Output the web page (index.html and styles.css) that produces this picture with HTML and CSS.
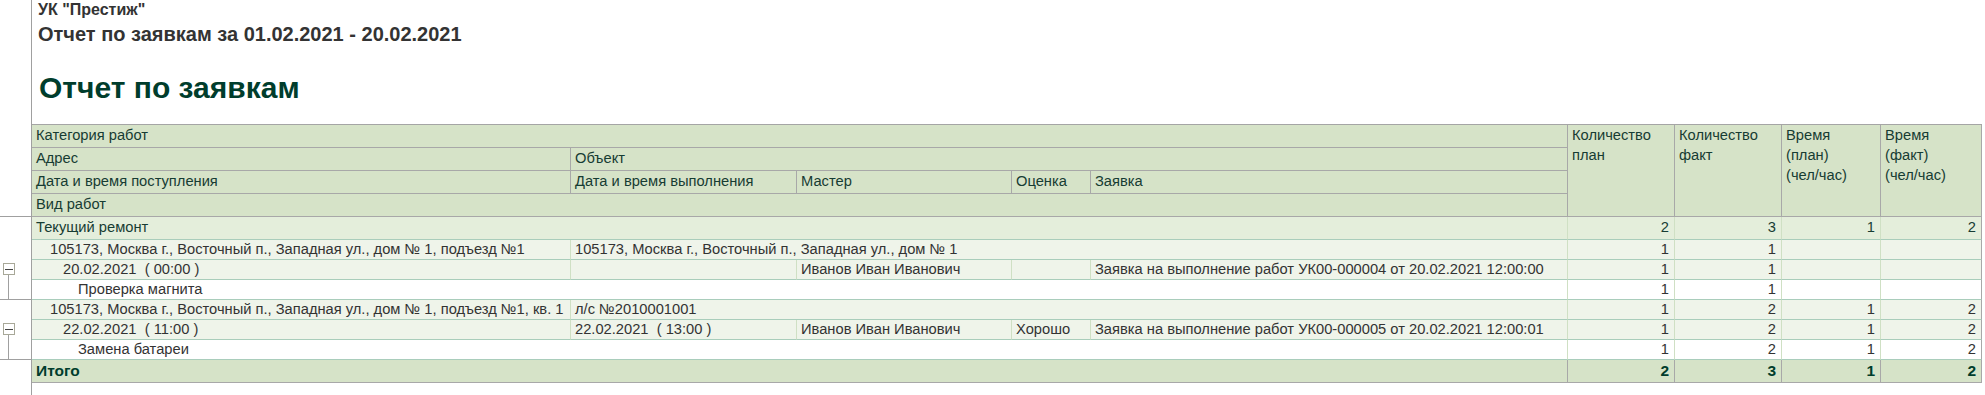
FILE: index.html
```html
<!DOCTYPE html>
<html lang="ru">
<head>
<meta charset="utf-8">
<title>Отчет по заявкам</title>
<link rel="stylesheet" href="styles.css">
</head>
<body>
<div class="page">
  <div class="outline">
    <div class="ol-head"></div>
    <div class="ol-group ol-g1">
      <div class="ol-box"><span class="ol-minus"></span></div>
      <div class="ol-stem"></div>
    </div>
    <div class="ol-group ol-g2">
      <div class="ol-box"><span class="ol-minus"></span></div>
      <div class="ol-stem"></div>
    </div>
  </div>
  <div class="content">
    <div class="org">УК "Престиж"</div>
    <div class="period">Отчет по заявкам за 01.02.2021 - 20.02.2021</div>
    <h1 class="title">Отчет по заявкам</h1>
    <div class="grid">
      <div class="c hd s5">Категория работ</div>
      <div class="c hd hn">Количество<br>план</div>
      <div class="c hd hn">Количество<br>факт</div>
      <div class="c hd hn">Время<br>(план)<br>(чел/час)</div>
      <div class="c hd hn last">Время<br>(факт)<br>(чел/час)</div>
      <div class="c hd">Адрес</div>
      <div class="c hd s4">Объект</div>
      <div class="c hd">Дата и время поступления</div>
      <div class="c hd">Дата и время выполнения</div>
      <div class="c hd">Мастер</div>
      <div class="c hd">Оценка</div>
      <div class="c hd">Заявка</div>
      <div class="c hd s5">Вид работ</div>

      <div class="c grp s5">Текущий ремонт</div>
      <div class="c grp n">2</div>
      <div class="c grp n">3</div>
      <div class="c grp n">1</div>
      <div class="c grp n last">2</div>

      <div class="c det i1">105173, Москва г., Восточный п., Западная ул., дом № 1, подъезд №1</div>
      <div class="c det s4">105173, Москва г., Восточный п., Западная ул., дом № 1</div>
      <div class="c det n">1</div>
      <div class="c det n">1</div>
      <div class="c det n"></div>
      <div class="c det n last"></div>

      <div class="c det i2">20.02.2021&nbsp; ( 00:00 )</div>
      <div class="c det"></div>
      <div class="c det">Иванов Иван Иванович</div>
      <div class="c det"></div>
      <div class="c det">Заявка на выполнение работ УК00-000004 от 20.02.2021 12:00:00</div>
      <div class="c det n">1</div>
      <div class="c det n">1</div>
      <div class="c det n"></div>
      <div class="c det n last"></div>

      <div class="c leaf s5 i3">Проверка магнита</div>
      <div class="c leaf n">1</div>
      <div class="c leaf n">1</div>
      <div class="c leaf n"></div>
      <div class="c leaf n last"></div>

      <div class="c det i1">105173, Москва г., Восточный п., Западная ул., дом № 1, подъезд №1, кв. 1</div>
      <div class="c det s4">л/с №2010001001</div>
      <div class="c det n">1</div>
      <div class="c det n">2</div>
      <div class="c det n">1</div>
      <div class="c det n last">2</div>

      <div class="c det i2">22.02.2021&nbsp; ( 11:00 )</div>
      <div class="c det">22.02.2021&nbsp; ( 13:00 )</div>
      <div class="c det">Иванов Иван Иванович</div>
      <div class="c det">Хорошо</div>
      <div class="c det">Заявка на выполнение работ УК00-000005 от 20.02.2021 12:00:01</div>
      <div class="c det n">1</div>
      <div class="c det n">2</div>
      <div class="c det n">1</div>
      <div class="c det n last">2</div>

      <div class="c leaf s5 i3">Замена батареи</div>
      <div class="c leaf n">1</div>
      <div class="c leaf n">2</div>
      <div class="c leaf n">1</div>
      <div class="c leaf n last">2</div>

      <div class="c tot s5">Итого</div>
      <div class="c tot n">2</div>
      <div class="c tot n">3</div>
      <div class="c tot n">1</div>
      <div class="c tot n last">2</div>
    </div>
  </div>
</div>
</body>
</html>
```
FILE: styles.css
```css
* { box-sizing: border-box; }
html, body { margin: 0; padding: 0; background: #fff; }
body {
  font-family: "Liberation Sans", Arial, sans-serif;
  color: #333;
  width: 1985px;
  height: 395px;
  overflow: hidden;
}
.page {
  display: flex;
  min-height: 395px;
}
.outline {
  width: 32px;
  flex: none;
  border-right: 1px solid #a0a0a0;
}
.ol-head {
  height: 217px;
  border-bottom: 1px solid #a0a0a0;
}
.ol-group {
  border-bottom: 1px solid #a0a0a0;
}
.ol-g1 { padding-top: 46px; }
.ol-g2 { padding-top: 23px; }
.ol-box {
  width: 12px;
  height: 12px;
  margin-left: 3px;
  border: 1px solid #a8a898;
  background: #fff;
  display: flex;
  align-items: center;
  justify-content: center;
}
.ol-minus {
  width: 8px;
  height: 1px;
  background: #444;
}
.ol-stem {
  width: 1px;
  height: 24px;
  margin-left: 8px;
  background: #a0a0a0;
}
.content {
  flex: 1;
  min-width: 0;
}
.org {
  font-weight: bold;
  font-size: 16px;
  line-height: 17px;
  padding-top: 1px;
  padding-left: 6px;
  color: #333;
}
.period {
  font-weight: bold;
  font-size: 20px;
  line-height: 22px;
  padding-left: 6px;
  margin-top: 5px;
  color: #333;
}
.title {
  margin: 26px 0 0;
  font-size: 30px;
  line-height: 34px;
  font-weight: bold;
  color: #003d2c;
  padding-left: 7px;
}
.grid {
  margin-top: 19px;
  display: grid;
  grid-template-columns: 539px 226px 215px 79px 477px 107px 107px 99px 101px;
  grid-template-rows: 23px 23px 23px 23px 23px 20px 20px 20px 20px 20px 20px 23px;
  border-top: 1px solid #a5a5a5;
  font-size: 14.7px;
  line-height: 18px;
  width: 1950px;
}
.c {
  border-right: 1px solid #cfe0c4;
  border-bottom: 1px solid #a9cdbb;
  padding: 0 5px 0 4px;
  white-space: nowrap;
  overflow: hidden;
}
.s5 { grid-column: span 5; }
.s4 { grid-column: span 4; }
.hd {
  background: #d6e3c8;
  border-color: #a8a8a8;
  color: #173c33;
  padding-top: 1px;
}
.hn {
  grid-row: span 4;
  white-space: normal;
  padding-top: 0;
  line-height: 20px;
}
.grp {
  background: #e4eedb;
  color: #173c33;
  padding-top: 1px;
}
.det { background: #eff4ea; }
.leaf { background: #fff; }
.tot {
  background: #d6e3c8;
  border-color: #a8a8a8;
  color: #003d2c;
  font-weight: bold;
  font-size: 15.5px;
  padding-top: 2px;
}
.n { text-align: right; }
.last { border-right-color: #a8a8a8; }
.i1 { padding-left: 18px; }
.i2 { padding-left: 31px; }
.i3 { padding-left: 46px; }
```
